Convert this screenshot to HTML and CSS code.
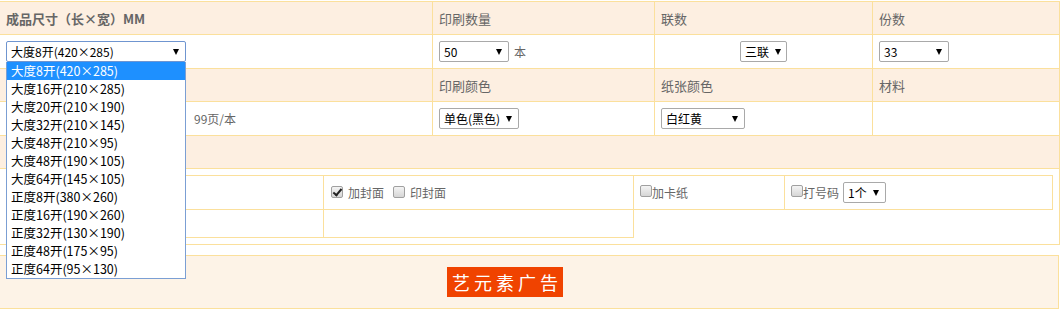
FILE: index.html
```html
<!DOCTYPE html>
<html lang="zh-CN">
<head>
<meta charset="utf-8">
<title>印刷报价</title>
<link rel="stylesheet" href="styles.css">
</head>
<body>
<div class="page">
  <div class="order">
    <div class="cell head strong">成品尺寸（长×宽）MM</div>
    <div class="cell head">印刷数量</div>
    <div class="cell head">联数</div>
    <div class="cell head">份数</div>

    <div class="cell">
      <div class="dropdown">
        <span class="sel sel-open w180"><span>大度8开(420×285)</span><i class="caret"></i></span>
        <ul class="options">
          <li class="active">大度8开(420×285)</li>
          <li>大度16开(210×285)</li>
          <li>大度20开(210×190)</li>
          <li>大度32开(210×145)</li>
          <li>大度48开(210×95)</li>
          <li>大度48开(190×105)</li>
          <li>大度64开(145×105)</li>
          <li>正度8开(380×260)</li>
          <li>正度16开(190×260)</li>
          <li>正度32开(130×190)</li>
          <li>正度48开(175×95)</li>
          <li>正度64开(95×130)</li>
        </ul>
      </div>
    </div>
    <div class="cell"><span class="sel w70"><span>50</span><i class="caret"></i></span><span class="unit">本</span></div>
    <div class="cell center"><span class="sel w47"><span>三联</span><i class="caret"></i></span></div>
    <div class="cell"><span class="sel w70"><span>33</span><i class="caret"></i></span></div>

    <div class="cell head"></div>
    <div class="cell head">印刷颜色</div>
    <div class="cell head">纸张颜色</div>
    <div class="cell head">材料</div>

    <div class="cell"><span class="sel w180"><span></span><i class="caret"></i></span><span class="unit pages">99页/本</span></div>
    <div class="cell"><span class="sel w80"><span>单色(黑色)</span><i class="caret"></i></span></div>
    <div class="cell"><span class="sel w84"><span>白红黄</span><i class="caret"></i></span></div>
    <div class="cell"></div>

    <div class="cell head span-all"></div>
    <div class="cell span-all extras">
      <div class="extras-grid">
        <div class="xcell"></div>
        <div class="xcell first-opts">
          <label class="opt"><input type="checkbox" class="chk" checked>加封面</label>
          <label class="opt"><input type="checkbox" class="chk">印封面</label>
        </div>
        <div class="xcell">
          <label class="opt tight"><input type="checkbox" class="chk">加卡纸</label>
        </div>
        <div class="xcell">
          <label class="opt tight"><input type="checkbox" class="chk">打号码</label>
          <span class="sel w43"><span>1个</span><i class="caret"></i></span>
        </div>
        <div class="xcell short"></div>
        <div class="xcell short"></div>
      </div>
    </div>
  </div>
  <div class="ad"><span class="ad-badge">艺元素广告</span></div>
</div>
</body>
</html>
```

FILE: styles.css
```css
* {
  box-sizing: border-box;
}

body {
  margin: 0;
  font-family: "Noto Sans CJK SC", "Microsoft YaHei", sans-serif;
  font-size: 13px;
  color: #666;
  background: #fff;
}

.page {
  padding-top: 1px;
}

.order {
  display: grid;
  grid-template-columns: 433px 222px 218px 187px;
  width: 1061px;
  margin-left: -1px;
  border-top: 1px solid #fbe09c;
  border-left: 1px solid #fbe09c;
}

.cell {
  display: flex;
  align-items: center;
  height: 34px;
  padding: 0 6px;
  border-right: 1px solid #fbe09c;
  border-bottom: 1px solid #fbe09c;
  background: #fff;
}

.head {
  height: 33px;
  background: #fdefe1;
}

.strong {
  font-weight: bold;
}

.span-all {
  grid-column: 1 / -1;
}

.center {
  justify-content: center;
}

.sel {
  display: inline-flex;
  align-items: center;
  justify-content: space-between;
  flex: none;
  height: 21px;
  padding: 0 6px 0 4px;
  border: 1px solid #a9a9a9;
  border-radius: 2px;
  background: #fff;
  color: #000;
  font-size: 12px;
  white-space: nowrap;
}

.caret {
  flex: none;
  width: 0;
  height: 0;
  margin-left: 6px;
  border-left: 3px solid transparent;
  border-right: 3px solid transparent;
  border-top: 6px solid #000;
}

.w43 { width: 43px; }
.w47 { width: 47px; }
.w70 { width: 70px; }
.w80 { width: 80px; }
.w84 { width: 84px; }
.w180 { width: 180px; }

.unit {
  margin-left: 5px;
  font-size: 12px;
}

.unit.pages {
  margin-left: 8px;
}

.dropdown {
  position: relative;
}

.sel-open {
  border-color: #6f95d0;
}

.options {
  position: absolute;
  top: 100%;
  left: 0;
  z-index: 5;
  width: 180px;
  margin: 0;
  padding: 0;
  list-style: none;
  background: #fff;
  border: 1px solid #7b9fd4;
  border-top: none;
}

.options li {
  height: 18px;
  line-height: 18px;
  padding-left: 4px;
  color: #000;
  font-size: 12.5px;
  white-space: nowrap;
}

.options li.active {
  background: #1e90ff;
  color: #fff;
}

.extras {
  display: block;
  height: 76px;
  padding: 6px 6px 6px 7px;
}

.extras-grid {
  display: grid;
  grid-template-columns: 316px 310px 151px 268px;
  grid-template-rows: 34px 28px;
  border-top: 1px solid #fbe09c;
  border-left: 1px solid #fbe09c;
}

.xcell {
  display: flex;
  align-items: center;
  padding-left: 6px;
  border-right: 1px solid #fbe09c;
  border-bottom: 1px solid #fbe09c;
  font-size: 12px;
}

.first-opts {
  padding-left: 7px;
}

.opt {
  display: inline-flex;
  align-items: center;
  margin-right: 9px;
}

.opt.tight {
  margin-right: 4px;
}

.chk {
  -webkit-appearance: none;
  appearance: none;
  position: relative;
  flex: none;
  width: 12px;
  height: 12px;
  margin: 0 5px 1px 0;
  border: 1px solid #a0a0a0;
  border-radius: 2px;
  background: linear-gradient(#f4f4f4, #d6d6d6);
}

.opt.tight .chk {
  margin-right: 0;
  margin-bottom: 3px;
}

.chk:checked::after {
  content: "";
  position: absolute;
  left: 3px;
  top: 0;
  width: 3px;
  height: 7px;
  border: solid #222;
  border-width: 0 2px 2px 0;
  transform: rotate(40deg);
}

.ad {
  display: flex;
  align-items: center;
  width: 1060px;
  height: 54px;
  margin: 10px 0 0 -1px;
  padding-left: 447px;
  border: 1px solid #fbe09c;
  background: #fdf3e7;
}

.ad-badge {
  height: 30px;
  line-height: 30px;
  padding: 0 1px 0 5px;
  background: #f04300;
  color: #fff;
  font-size: 18px;
  letter-spacing: 4px;
}
```
